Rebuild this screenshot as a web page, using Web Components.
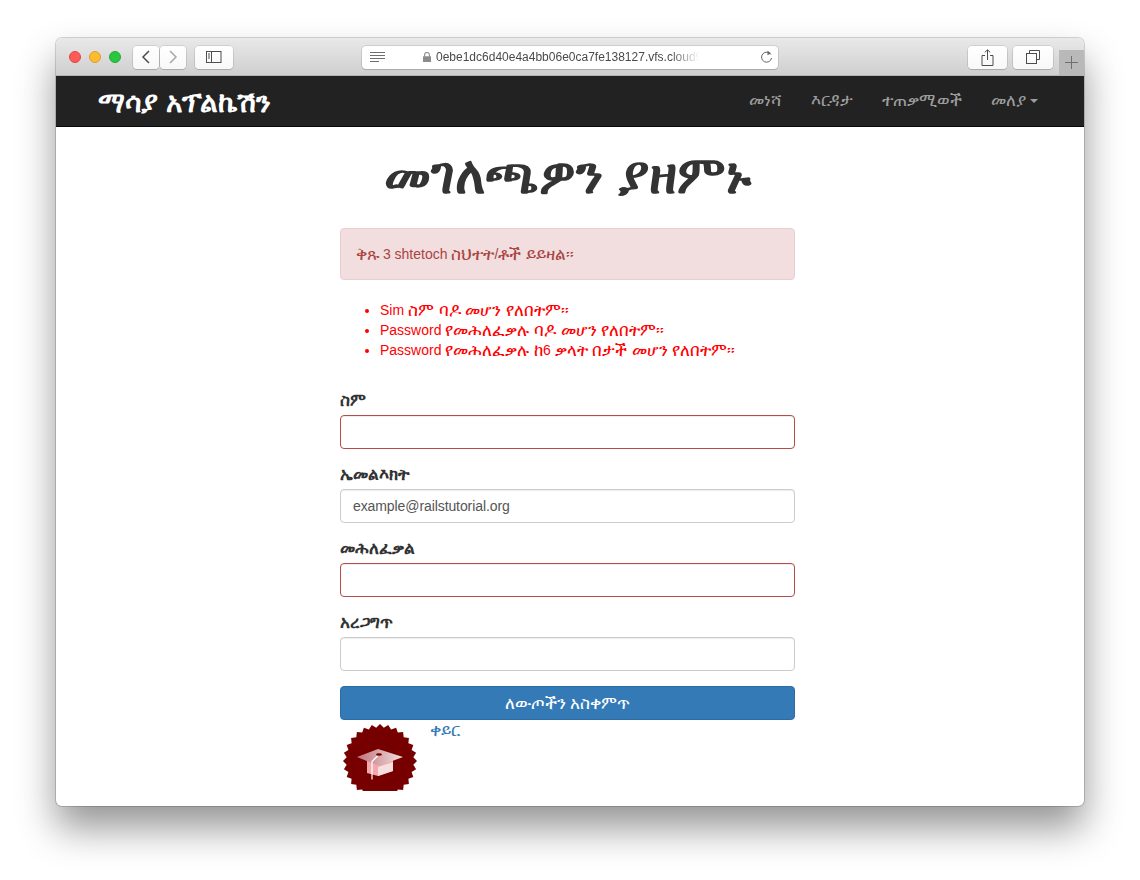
<!DOCTYPE html>
<html lang="am"><head><meta charset="utf-8"><title>Profile</title>
<style>
html,body{margin:0;padding:0;background:#fff}
body{font-family:"Liberation Sans","DejaVu Sans",sans-serif;padding:38px 0 0 56px;height:842px;overflow:hidden}
</style></head><body>
<mac-window>
  <mac-toolbar slot="toolbar"></mac-toolbar>
  <app-navbar></app-navbar>
  <profile-page></profile-page>
</mac-window>
<script>
const F='"Liberation Sans","DejaVu Sans",sans-serif';
const et=s=>s.replace(/[\u1200-\u137F]+(?: [\u1200-\u137F]+)*/g,m=>'<span style="font-size:1.18em;line-height:0;vertical-align:-.07em">'+m+'</span>');
function def(name,html){customElements.define(name,class extends HTMLElement{constructor(){super();this.attachShadow({mode:'open'}).innerHTML=et(html)}})}

def('mac-window',`<style>:host{display:block;width:1028px;height:768px;border-radius:6px;overflow:hidden;background:#fff;box-shadow:0 0 0 1px rgba(0,0,0,.16),0 22px 38px rgba(0,0,0,.42);position:relative}</style><slot name="toolbar"></slot><slot></slot>`);

def('tool-btn',`<style>:host{display:flex;align-items:center;justify-content:center;height:23px;background:linear-gradient(#fff,#f8f8f8);border-radius:4px;box-shadow:0 0 0 .5px rgba(0,0,0,.18),0 1px 1px rgba(0,0,0,.12);box-sizing:border-box}</style><slot></slot>`);

def('mac-toolbar',`<style>
:host{display:flex;align-items:center;height:38px;box-sizing:border-box;padding:1px 0 0 13px;background:linear-gradient(#e9e9e9,#cfcfcf);border-bottom:1px solid #b4b4b4;position:relative}
.dot{width:12px;height:12px;border-radius:50%;margin-right:8px;box-sizing:border-box}
.r{background:#fc5b57;border:.5px solid #df4744}.y{background:#fdbb2e;border:.5px solid #de9f34}.g{background:#29c73f;border:.5px solid #27aa35}
svg{display:block;fill:none;stroke:#4d4d4d}
.url{display:flex;align-items:center;width:416px;margin-left:129px;height:23px;background:#fff;border-radius:4px;box-shadow:0 0 0 .5px rgba(0,0,0,.18),0 1px 1px rgba(0,0,0,.12);padding:0 5px 0 8px;box-sizing:border-box;font:12px ${F};color:#4a4a4a}
.txt{white-space:nowrap;margin-left:5px;-webkit-mask-image:linear-gradient(90deg,#000 88%,transparent 99%);mask-image:linear-gradient(90deg,#000 88%,transparent 99%)}
.plus{position:absolute;right:0;top:12px;width:25px;height:25px;background:#b9b9b9;display:flex;align-items:center;justify-content:center}
</style>
<span class="dot r"></span><span class="dot y"></span><span class="dot g" style="margin-right:12px"></span>
<tool-btn style="width:26px"><svg width="10" height="16" viewBox="0 0 10 16"><path d="M8 2 2 8l6 6" stroke-width="1.5"/></svg></tool-btn>
<tool-btn style="width:26px;margin-left:1px"><svg width="10" height="16" viewBox="0 0 10 16"><path d="M2 2l6 6-6 6" stroke-width="1.5" stroke="#a8a8a8"/></svg></tool-btn>
<tool-btn style="width:38px;margin-left:9px"><svg width="16" height="12" viewBox="0 0 16 12"><rect x=".5" y=".5" width="14.500" height="11" stroke-width="1"/><path d="M5.500 .5v11M2 3h2M2 5h2M2 7h2" stroke-width="1"/></svg></tool-btn>
<div class="url">
<svg width="15" height="11" viewBox="0 0 15 11" style="stroke:#6e6e6e"><path d="M0 .5h15M0 3.500h15M0 6.500h15M0 9.500h9" stroke-width="1"/></svg>
<svg width="8" height="10" viewBox="0 0 8 10" style="margin-left:38px;stroke:none;fill:#8c8c8c"><path d="M0 4.200h8V10H0z"/><path d="M1.600 4.500V2.800a2.400 2.400 0 0 1 4.800 0v1.700" fill="none" stroke="#8c8c8c" stroke-width="1.100"/></svg>
<span class="txt">0ebe1dc6d40e4a4bb06e0ca7fe138127.vfs.cloud9</span>
<svg width="13" height="14" viewBox="0 0 13 14" style="margin-left:auto;stroke:#666"><path d="M10.800 4.500A5 5 0 1 0 11.500 8" stroke-width="1"/><path d="M7.500 0.800 11 3.200 7.500 5.200z" fill="#666" stroke="none"/></svg>
</div>
<tool-btn style="width:39px;margin-left:190px"><svg width="13" height="17" viewBox="0 0 13 17"><path d="M4 6.500H1v10h11v-10H9M6.500 11V1M3.800 3.400 6.500.8l2.700 2.600" stroke-width="1"/></svg></tool-btn>
<tool-btn style="width:40px;margin-left:6px"><svg width="14" height="14" viewBox="0 0 14 14"><path d="M3.500 3.500V.5h10v9h-3" stroke-width="1"/><rect x=".5" y="3.500" width="10" height="10" stroke-width="1"/></svg></tool-btn>
<div class="plus"><svg width="13" height="13" viewBox="0 0 13 13" style="stroke:#6f6f6f"><path d="M6.500 0v13M0 6.500h13" stroke-width="1"/></svg></div>`);

def('nav-link',`<style>:host{display:flex;align-items:center;padding:0 14.5px;font-size:14px;color:#9d9d9d;height:50px}</style><slot></slot>`);

def('app-navbar',`<style>
:host{display:flex;align-items:center;justify-content:space-between;height:51px;box-sizing:border-box;background:#222;border-bottom:1px solid #080808;padding:0 31.5px 0 42px;font-family:${F}}
.b{font-size:24px;font-weight:bold;color:#fff;padding-top:2px}
nav{display:flex}
.c{display:inline-block;margin-left:4px;vertical-align:middle;border-top:4px solid #9d9d9d;border-left:4px solid transparent;border-right:4px solid transparent}
</style>
<div class="b">ማሳያ አፕልኬሽን</div>
<nav><nav-link>መነሻ</nav-link><nav-link>እርዳታ</nav-link><nav-link>ተጠቃሚወች</nav-link><nav-link>መለያ<span class="c"></span></nav-link></nav>`);

customElements.define('form-field',class extends HTMLElement{constructor(){super();const t=this;this.attachShadow({mode:'open'}).innerHTML=`<style>
:host{display:block;margin-bottom:15px}
label{display:block;font-size:14px;line-height:20px;font-weight:bold;color:#333;margin-bottom:5px}
input{display:block;width:100%;height:34px;box-sizing:border-box;border:1px solid ${t.hasAttribute('error')?'#b94a48':'#ccc'};border-radius:4px;padding:6px 12px;font:14px/20px ${F};letter-spacing:-.09px;color:#555;background:#fff;box-shadow:inset 0 1px 1px rgba(0,0,0,.075);margin:0}
</style><label><slot></slot></label><input type="${t.getAttribute('type')||'text'}" value="${t.getAttribute('value')||''}">`}});

def('alert-box',`<style>:host{display:block;box-sizing:border-box;height:52px;padding:15px;border:1px solid #ebccd1;border-radius:4px;background:#f2dede;color:#a94442;font-size:14px;line-height:20px;margin-bottom:20px}</style><slot></slot>`);

def('error-list',`<style>:host{display:block;margin-bottom:30px}ul{margin:0;padding:0 0 0 40px;color:#f00;font-size:14px;line-height:20px}</style><ul><li>Sim ስም ባዶ መሆን የለበትም።</li><li>Password የመሕለፈቃሉ ባዶ መሆን የለበትም።</li><li>Password የመሕለፈቃሉ ከ6 ቃላት በታች መሆን የለበትም።</li></ul>`);

def('submit-btn',`<style>:host{display:block;height:34px;box-sizing:border-box;background:#337ab7;border:1px solid #2e6da4;border-radius:4px;color:#fff;font-size:14px;line-height:20px;padding:6px 12px;text-align:center}</style><slot></slot>`);

const teeth=(()=>{let p=[];const n=28;for(let i=0;i<n*2;i++){const r=i%2?33.5:37,a=i*Math.PI/n;p.push((40+r*Math.sin(a)).toFixed(1)+','+(41-r*Math.cos(a)).toFixed(1))}return p.join(' ')})();
def('grad-badge',`<style>:host{display:block;width:80px;height:71px;overflow:hidden}svg{display:block}</style>
<svg width="80" height="71" viewBox="0 0 80 71"><polygon points="${teeth}" fill="#760000"/>
<defs><linearGradient id="g" x1="0" x2="1"><stop offset="0" stop-color="#c0737a"/><stop offset="1" stop-color="#f1dfe0"/></linearGradient></defs>
<path d="M27 40v13l11 3 15-5V40z" fill="#f2a9ae"/><path d="M38 47l15-5v9l-15 5z" fill="#f7dfe0"/>
<path d="M17 37l21-8 25 8-24 9z" fill="url(#g)"/>
<path d="M38 35.500l-6 6v18" fill="none" stroke="#fff" stroke-width="1.200"/><ellipse cx="39" cy="34.500" rx="3" ry="1.300" fill="#760000"/></svg>`);

def('profile-page',`<style>
:host{display:block;font-family:${F};color:#333}
h1{margin:0 0 29px;padding-top:21px;font-size:44px;line-height:51px;font-weight:bold;text-align:center;height:51px;margin-left:-5px}
.form{width:455px;margin-left:284px}
.foot{display:flex;align-items:flex-start}
a{color:#337ab7;font-size:14px;line-height:20px;margin-left:10px}
</style>
<h1>መገለጫዎን ያዘምኑ</h1>
<div class="form">
<alert-box>ቅጹ 3 shtetoch ስህተት/ቶች ይይዛል።</alert-box>
<error-list></error-list>
<form-field error>ስም</form-field>
<form-field value="example@railstutorial.org">ኤመልእክት</form-field>
<form-field type="password" error>መሕለፈቃል</form-field>
<form-field type="password">አረጋግጥ</form-field>
<submit-btn>ለውጦችን አስቀምጥ</submit-btn>
<div class="foot"><grad-badge></grad-badge><a>ቀይር</a></div>
</div>`);
</script>
</body></html>
